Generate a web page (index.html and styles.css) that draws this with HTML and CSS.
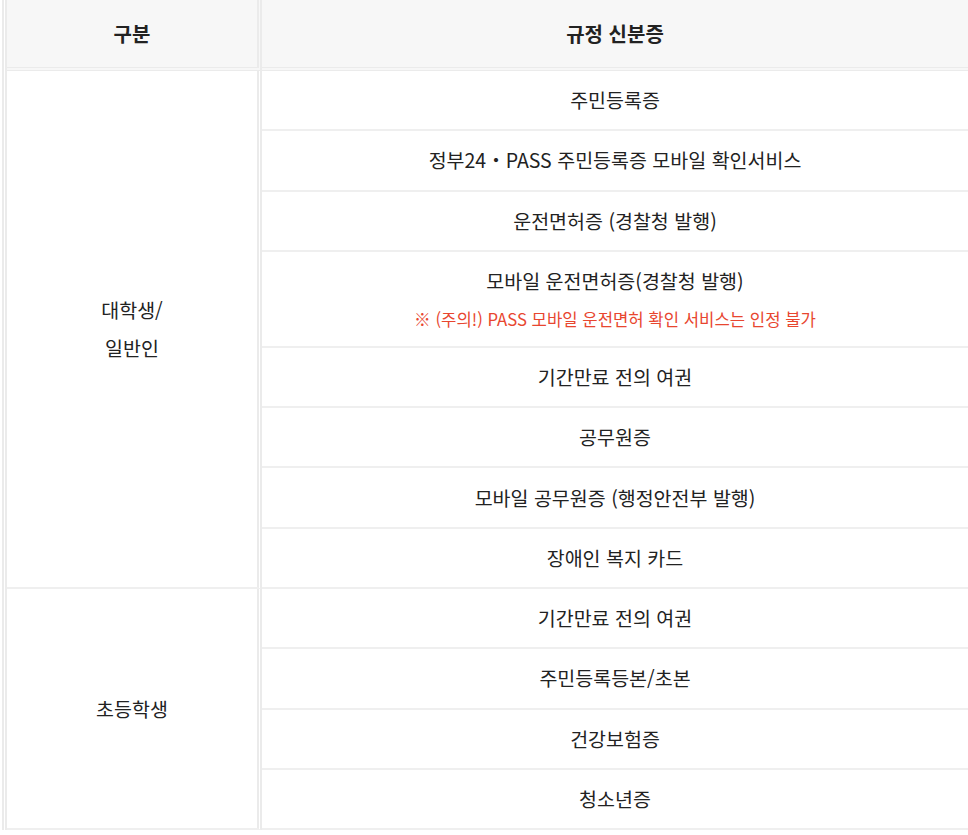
FILE: index.html
```html
<!DOCTYPE html>
<html lang="ko">
<head>
<meta charset="utf-8">
<title>규정 신분증</title>
<link rel="stylesheet" href="styles.css">
</head>
<body>
<table class="id-table">
  <thead>
    <tr>
      <th class="col-type">구분</th>
      <th class="col-id">규정 신분증</th>
    </tr>
  </thead>
  <tbody>
    <tr>
      <td class="type" rowspan="8">대학생/<br>일반인</td>
      <td class="item">주민등록증</td>
    </tr>
    <tr><td class="item">정부24・PASS 주민등록증 모바일 확인서비스</td></tr>
    <tr><td class="item">운전면허증 (경찰청 발행)</td></tr>
    <tr>
      <td class="item">모바일 운전면허증(경찰청 발행)
        <div class="notice">※ (주의!) PASS 모바일 운전면허 확인 서비스는 인정 불가</div>
      </td>
    </tr>
    <tr><td class="item">기간만료 전의 여권</td></tr>
    <tr><td class="item">공무원증</td></tr>
    <tr><td class="item">모바일 공무원증 (행정안전부 발행)</td></tr>
    <tr><td class="item">장애인 복지 카드</td></tr>
    <tr>
      <td class="type" rowspan="4">초등학생</td>
      <td class="item">기간만료 전의 여권</td>
    </tr>
    <tr><td class="item">주민등록등본/초본</td></tr>
    <tr><td class="item">건강보험증</td></tr>
    <tr><td class="item">청소년증</td></tr>
  </tbody>
</table>
</body>
</html>
```

FILE: styles.css
```css
html, body {
  margin: 0;
  padding: 0;
  background: #ffffff;
}

body {
  font-family: "Noto Sans CJK KR", "Noto Sans", sans-serif;
  color: #222222;
  font-size: 19.5px;
}

.id-table {
  margin-left: 2px;
  width: 966px;
  border-collapse: separate;
  border-spacing: 0;
  table-layout: fixed;
  border-left: 5px double #ebebeb;
  font-size: 19.5px;
}

.id-table th {
  height: 67px;
  padding: 0;
  background: #f7f7f7;
  font-weight: 600;
  font-size: 20px;
  color: #222222;
  text-align: center;
  vertical-align: middle;
  border-bottom: 4px double #ebebeb;
}

.col-type {
  width: 250px;
  border-right: 5px double #ebebeb;
}

.id-table td {
  text-align: center;
  vertical-align: middle;
  border-bottom: 2px solid #efefef;
  line-height: 38px;
}

.type {
  padding: 0;
  border-right: 5px double #ebebeb;
}

.item {
  padding: 10.15px 0;
}

.notice {
  color: #e8462f;
  font-size: 16.7px;
  line-height: 34px;
  padding-top: 1.7px;
}
```
